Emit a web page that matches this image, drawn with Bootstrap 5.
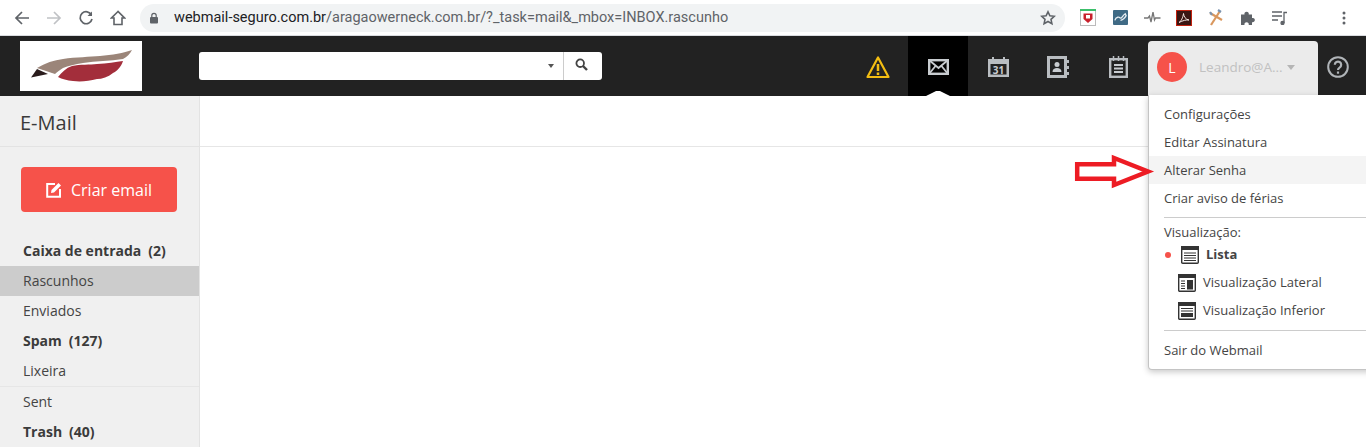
<!DOCTYPE html>
<html lang="pt-BR">
<head>
<meta charset="utf-8">
<title>Webmail</title>
<link rel="stylesheet" href="https://cdn.jsdelivr.net/npm/bootstrap@5.3.0/dist/css/bootstrap.min.css">
<style>
html,body{height:447px;overflow:hidden;margin:0}
body{font-family:"Open Sans",sans-serif;font-size:13px;color:#333;background:#fff;position:relative}
.chrome-bar{height:36px;background:#fff;border-bottom:1px solid #dadce0;padding-left:8px}
.chrome-btn{width:28px;height:28px;display:flex;align-items:center;justify-content:center;margin-right:4px}
.omni{width:925px;height:28px;margin-left:4px;background:#f1f3f4;border-radius:14px;font-family:"Roboto",sans-serif;font-size:14.5px;color:#5f6368;padding-left:9px;padding-right:9px}
.omni b{font-weight:400;color:#202124}
.lock-ic{margin-right:15px;flex:none}
.ext-row{margin-left:7px}
.ext{width:32px;height:28px;display:flex;align-items:center;justify-content:center}
.ext-last{margin-left:32px}
.topbar{height:60px;background:#222}
.logo-box{width:122px;height:50px;background:#fff;margin-left:20px;margin-top:5px;flex:none}
.search-box{width:403px;height:28px;background:#fff;border-radius:3px;margin-left:57px;margin-top:16px;flex:none}
.search-box .sb-input{flex:1}
.sb-caret{width:0;height:0;border-left:3.5px solid transparent;border-right:3.5px solid transparent;border-top:4px solid #555;margin-right:9px}
.sb-btn{width:39px;height:100%;border-left:1px solid #ccc;padding-right:3px;padding-bottom:3px}
.nav-ic{width:60px;height:60px;display:flex;align-items:center;justify-content:center;position:relative;padding-top:2px}
.nav-ic.on{background:#000}
.nav-ic.on::after{content:"";position:absolute;left:50%;bottom:0;margin-left:-12px;width:24px;height:5px;background:#fff;clip-path:polygon(0 100%,42% 0,58% 0,100% 100%)}
.user-tab{width:170px;height:54px;margin-top:5px;background:#ebebeb;border-radius:4px 4px 0 0;padding-left:9px;padding-bottom:2px;flex:none}
.avatar{width:30px;height:30px;border-radius:50%;background:#f6524a;color:#fff;font-size:14px;display:flex;align-items:center;justify-content:center;margin-right:12px}
.user-name{font-size:13.5px;color:#c1c1c1;width:88px}
.user-caret{width:0;height:0;border-left:4.5px solid transparent;border-right:4.5px solid transparent;border-top:5px solid #b5b5b5}
.help-ic{width:39px;height:60px;margin-right:9px;padding-top:2px}
.main-wrap{height:351px}
.side-col{width:200px;background:#f0f0f0;border-right:1px solid #e3e3e3;flex:none;overflow:hidden}
.side-title{height:51px;border-bottom:1px solid #e3e3e3;font-size:20px;padding-left:20px;line-height:54px;color:#3a3a3a}
.btn-new{width:156px;height:45px;margin:20px 0 0 21px;background:#f6524a;color:#fff;font-size:16px;border-radius:4px;border:0;padding:0;display:flex;align-items:center;justify-content:center;gap:9px}
.btn-new:hover{background:#f6524a;color:#fff}
.folders{margin-top:24px}
.folder{height:30px;line-height:30px;padding-left:23px;font-size:14px;color:#444}
.folder.strong{font-weight:700;color:#3b3b3b}
.folder.strong span{margin-left:7px}
.folder.cur{background:#ccc;width:199px}
.folder.sep{border-bottom:1px solid #e6e6e6;height:31px}
.content-col{flex:1}
.content-head{height:51px;border-bottom:1px solid #e6e6e6}
.user-menu{position:absolute;left:1148px;top:95px;width:240px;height:275px;background:#fff;border:1px solid #c4c4c4;border-top:0;border-radius:0 0 4px 4px;box-shadow:0 2px 6px rgba(0,0,0,.22);color:#444;z-index:5;padding-top:5px}
.menu-item{height:28px;line-height:28px;padding-left:15px;font-size:13px}
.menu-item.hov{background:#f4f4f4}
.menu-line{height:1px;background:#ccc;margin:5px 0 0 15px}
.menu-label{padding-left:15px;line-height:18px;margin-top:5px;font-size:13px}
.view-row{height:28px;display:flex;align-items:center;font-size:13px}
.view-row svg{margin-left:29px;margin-right:7px;flex:none}
.view-row.act svg{margin-left:0;margin-right:7px}
.view-dot{width:6px;height:6px;border-radius:50%;background:#f6524a;margin-left:16px;margin-right:10px}
.view-row.act{font-weight:700}
.exit{margin-top:5px;height:28px;line-height:28px;padding-left:15px}
.red-arrow{position:absolute;left:1074px;top:154px;z-index:6}
</style>
</head>
<body>
<div class="chrome-bar d-flex align-items-center">
  <div class="chrome-btn"><svg width="16" height="16" viewBox="0 0 16 16" fill="none" stroke="#5f6368" stroke-width="1.700"><path d="M15 8H2M8 2 2 8l6 6"/></svg></div>
  <div class="chrome-btn"><svg width="16" height="16" viewBox="0 0 16 16" fill="none" stroke="#c0c2c5" stroke-width="1.700"><path d="M1 8h13M8 2l6 6-6 6"/></svg></div>
  <div class="chrome-btn"><svg width="16" height="16" viewBox="0 0 16 16" fill="none" stroke="#5f6368" stroke-width="1.700"><path d="M13.500 5A6 6 0 1 0 14 9"/><path d="M14 1.500v4.500H9.500" fill="#5f6368" stroke="none"/></svg></div>
  <div class="chrome-btn"><svg width="16" height="16" viewBox="0 0 16 16" fill="none" stroke="#5f6368" stroke-width="1.600"><path d="M8 1.500 1.500 8H4v6.500h8V8h2.500z"/></svg></div>
  <div class="omni d-flex align-items-center">
    <svg width="10" height="12" viewBox="0 0 10 12" class="lock-ic"><rect x="1" y="5" width="8" height="6.500" rx="1" fill="#5f6368"/><path d="M2.800 5V3.500a2.200 2.200 0 0 1 4.400 0V5" fill="none" stroke="#5f6368" stroke-width="1.200"/></svg>
    <span><b>webmail-seguro.com.br</b>/aragaowerneck.com.br/?_task=mail&amp;_mbox=INBOX.rascunho</span>
    <svg class="ms-auto" width="16" height="16" viewBox="0 0 16 16" fill="none" stroke="#5f6368" stroke-width="1.600"><path d="m8 1.800 1.900 4 4.400.5-3.300 3 .9 4.400L8 11.500l-3.900 2.200.9-4.400-3.300-3 4.400-.5z"/></svg>
  </div>
  <div class="d-flex ext-row">
    <div class="ext"><svg width="16" height="17" viewBox="0 0 16 17"><rect x=".5" y="1" width="15" height="15.500" fill="#fff" stroke="#bbb"/><rect width="16" height="2" fill="#3cbf6b"/><path d="M3.500 4.500h9v5.500L8 14l-4.500-4z" fill="#c8202c"/><path d="M6 6h4v3.500H6z" fill="#fff"/></svg></div>
    <div class="ext"><svg width="15" height="15" viewBox="0 0 16 16"><rect width="16" height="16" rx="1" fill="#3f6a85"/><path d="M2 11c1-4 5-4 6-2M8 9c2-1 3-4 5-5l1 2c-1 2-4 5-6 5" fill="none" stroke="#e6edf2" stroke-width="1.400"/></svg></div>
    <div class="ext"><svg width="17" height="12" viewBox="0 0 17 12" fill="none" stroke="#777" stroke-width="1.300"><path d="M0 6h4l1.500-2 1.500 6 2-10 1.500 8 1-2h5"/></svg></div>
    <div class="ext"><svg width="16" height="16" viewBox="0 0 16 16"><rect x=".5" y=".5" width="15" height="15" fill="#3a1512" stroke="#c1210f"/><path d="M3 12.500c2-1 4-5 4.500-9 .3 3 2 6 5.500 6.500-3-.3-6 .5-10 2.500z" fill="none" stroke="#f2e4e0"/></svg></div>
    <div class="ext"><svg width="16" height="17" viewBox="0 0 16 17" fill="none" stroke-width="2.200"><path d="M3 16 12 2" stroke="#d9975e"/><path d="M2 4l12 7" stroke="#d9975e"/><path d="M10 1l3 2M2 3l2 3" stroke="#7a93b0"/></svg></div>
    <div class="ext"><svg width="16" height="16" viewBox="0 0 16 16"><path d="M1 4.500h3.500a2.200 2.200 0 1 1 4.200 0H12V8a2.200 2.200 0 1 1 0 4.200V15H8.700a2.200 2.200 0 1 0-4.200 0H1z" fill="#5f6368"/></svg></div>
    <div class="ext"><svg width="16" height="14" viewBox="0 0 16 14" fill="none" stroke="#5f6368" stroke-width="1.300"><path d="M0 1h10M0 5h10M0 9h6"/><path d="M12 12V1.500h3"/><circle cx="10.500" cy="12" r="1.500" fill="#5f6368"/></svg></div>
    <div class="ext ext-last"><svg width="4" height="14" viewBox="0 0 4 14" fill="#5f6368"><circle cx="2" cy="2" r="1.500"/><circle cx="2" cy="7" r="1.500"/><circle cx="2" cy="12" r="1.500"/></svg></div>
  </div>
</div>

<div class="topbar d-flex">
  <div class="logo-box">
    <svg width="122" height="50" viewBox="0 0 122 50"><path d="M17 27C25 22 34 19 43 18 56 16 70 16 80 15 92 14 104 12 112 9 110 13 107 16 103 18 90 20 76 20 63 22 55 23 48 25 43 27 40 29 37 31 35 33z" fill="#9b8579"/><path d="M38 36C42 31 46 27 52 25 60 23 70 24 77 23 87 22.500 96 21 103 20 101 26 97 30 93 32 88 36 82 38 77 38 69 40 61 41 53 40 47 39.500 42 38 38 36z" fill="#a32e3b"/><path d="M11 36.500 17 28 28 33z" fill="#2a1c1c"/></svg>
  </div>
  <div class="search-box d-flex align-items-center">
    <div class="sb-input d-flex justify-content-end"><span class="sb-caret"></span></div>
    <div class="sb-btn d-flex align-items-center justify-content-center"><svg width="13" height="13" viewBox="0 0 13 13" fill="none" stroke="#444" stroke-width="1.800"><circle cx="5.200" cy="5.200" r="3.800"/><path d="m8 8 4 4" stroke-width="2.400"/></svg></div>
  </div>
  <div class="d-flex ms-auto align-items-start">
    <div class="nav-ic"><svg width="24" height="24" viewBox="0 0 24 24" fill="none" stroke="#f3bd12" stroke-width="2.200"><path d="M12 2.500 1.500 22h21z" stroke-linejoin="round"/><path d="M12 9v7M12 17.500v2.500" stroke-width="2.500"/></svg></div>
    <div class="nav-ic on"><svg width="21" height="16" viewBox="0 0 21 16" fill="none" stroke="#c8ccd0" stroke-width="2.400"><rect x="1.200" y="1.200" width="18.600" height="13.600"/><path d="m1 1 9.500 8L20 1M1 15l6.500-8M20 15l-6.500-8" stroke-width="1.800"/></svg></div>
    <div class="nav-ic"><svg width="21" height="20" viewBox="0 0 21 20"><path d="M0 2h4V0h2v2h9V0h2v2h4v18H0z" fill="#b9bdc1"/><rect x="2.500" y="7" width="16" height="10.500" fill="#222"/><text x="10.500" y="16.500" text-anchor="middle" font-family="Open Sans" font-weight="700" font-size="10" fill="#c8ccd0">31</text></svg></div>
    <div class="nav-ic"><svg width="22" height="22" viewBox="0 0 22 22"><rect x="1.500" y="1.500" width="17" height="19" fill="#222" stroke="#b9bdc1" stroke-width="3"/><path d="M19 4h3v3h-3zM19 10h3v3h-3zM19 16h3v3h-3z" fill="#b9bdc1"/><circle cx="10" cy="8.500" r="2.500" fill="#c8ccd0"/><path d="M5.500 16c0-3 2-4 4.500-4s4.500 1 4.500 4z" fill="#c8ccd0"/></svg></div>
    <div class="nav-ic"><svg width="19" height="22" viewBox="0 0 19 22"><rect x="1.200" y="3.200" width="16.600" height="17.600" fill="#222" stroke="#b9bdc1" stroke-width="2.400"/><path d="M4.500 0v5M9.500 0v5M14.500 0v5" stroke="#b9bdc1" stroke-width="1.500"/><path d="M5 9h9M5 12.500h9M5 16h9" stroke="#c8ccd0" stroke-width="1.800"/></svg></div>
    <div class="user-tab d-flex align-items-center">
      <div class="avatar">L</div>
      <div class="user-name">Leandro@A...</div>
      <span class="user-caret"></span>
    </div>
    <div class="help-ic d-flex align-items-center justify-content-center"><svg width="22" height="22" viewBox="0 0 22 22" fill="none" stroke="#b0b4b8" stroke-width="2"><circle cx="11" cy="11" r="9.800"/><path d="M7.800 8.800a3.200 3.200 0 1 1 4.800 2.800c-1 .6-1.600 1.100-1.600 2.400" stroke-width="2.200"/><path d="M11 15.500v2.200" stroke-width="2.200"/></svg></div>
  </div>
</div>

<div class="main-wrap d-flex">
  <div class="side-col">
    <div class="side-title">E-Mail</div>
    <button type="button" class="btn btn-new">
      <svg width="16" height="16" viewBox="0 0 16 16" fill="none" stroke="#fff" stroke-width="2"><path d="M9 2H1.200v12.800H14V7"/><path d="M5 11l.5-3 7-7 2.500 2.500-7 7z" fill="#fff" stroke="none"/></svg>
      <span>Criar email</span>
    </button>
    <div class="folders">
      <div class="folder strong">Caixa de entrada<span>(2)</span></div>
      <div class="folder cur">Rascunhos</div>
      <div class="folder">Enviados</div>
      <div class="folder strong">Spam<span>(127)</span></div>
      <div class="folder sep">Lixeira</div>
      <div class="folder">Sent</div>
      <div class="folder strong">Trash<span>(40)</span></div>
    </div>
  </div>
  <div class="content-col"><div class="content-head"></div></div>
</div>

<div class="user-menu">
  <div class="menu-item">Configurações</div>
  <div class="menu-item">Editar Assinatura</div>
  <div class="menu-item hov">Alterar Senha</div>
  <div class="menu-item">Criar aviso de férias</div>
  <div class="menu-line"></div>
  <div class="menu-label">Visualização:</div>
  <div class="view-row act"><span class="view-dot"></span><svg width="18" height="18" viewBox="0 0 18 18"><rect x=".7" y=".7" width="16.600" height="16.600" rx="1" fill="#fff" stroke="#333" stroke-width="1.400"/><rect width="18" height="4" fill="#333"/><path d="M3 7h12M3 9.500h12M3 12h12M3 14.500h12" stroke="#333" stroke-width="1.200"/></svg><span>Lista</span></div>
  <div class="view-row"><svg width="18" height="18" viewBox="0 0 18 18"><rect x=".7" y=".7" width="16.600" height="16.600" rx="1" fill="#fff" stroke="#333" stroke-width="1.400"/><rect width="18" height="4" fill="#333"/><path d="M3 7h4M3 9.500h4M3 12h4M3 14.500h4" stroke="#333" stroke-width="1.200"/><rect x="9" y="6" width="6" height="9.500" fill="#333"/></svg><span>Visualização Lateral</span></div>
  <div class="view-row"><svg width="18" height="18" viewBox="0 0 18 18"><rect x=".7" y=".7" width="16.600" height="16.600" rx="1" fill="#fff" stroke="#333" stroke-width="1.400"/><rect width="18" height="4" fill="#333"/><path d="M3 6.500h12M3 9h12" stroke="#333" stroke-width="1.200"/><rect x="3" y="11" width="12" height="4" fill="#333"/></svg><span>Visualização Inferior</span></div>
  <div class="menu-line"></div>
  <div class="exit">Sair do Webmail</div>
</div>

<svg class="red-arrow" width="82" height="36" viewBox="0 0 82 36"><path d="M3.200 10.200H40V4L74 17.500 40 31V24.800H3.200z" fill="#fff" stroke="#ed1c24" stroke-width="4.500"/></svg>
<script src="https://cdn.jsdelivr.net/npm/bootstrap@5.3.0/dist/js/bootstrap.bundle.min.js"></script>
</body>
</html>
